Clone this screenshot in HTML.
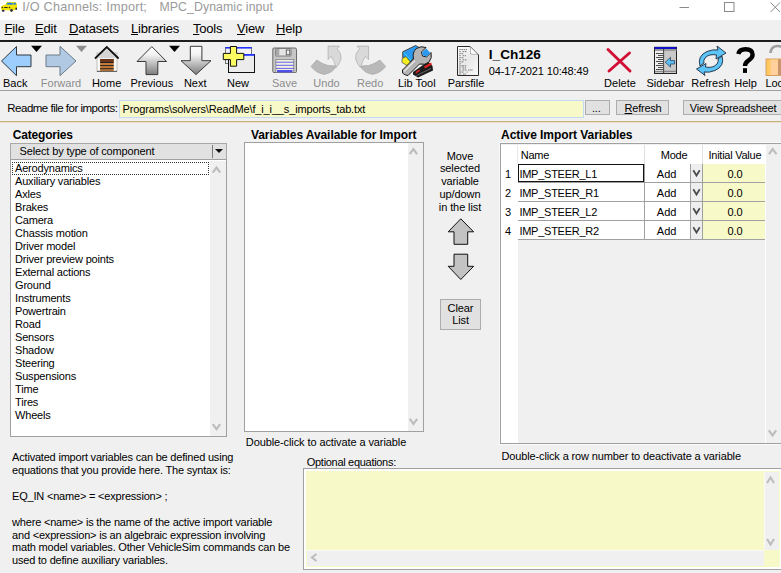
<!DOCTYPE html>
<html><head><meta charset="utf-8">
<style>
*{box-sizing:border-box;margin:0;padding:0}
html,body{width:781px;height:573px;overflow:hidden;background:#f0f0f0;font-family:"Liberation Sans",sans-serif;font-size:11px;color:#000}
.a{position:absolute;white-space:nowrap}
.t{position:absolute;white-space:nowrap;font-size:11px;line-height:13px;letter-spacing:-0.2px}
.mi{position:absolute;white-space:nowrap;top:20.5px;font-size:13px;line-height:15px;letter-spacing:-0.2px}
.mi u{text-decoration:underline;text-underline-offset:1px}
.tl{position:absolute;white-space:nowrap;top:76.8px;font-size:11px;line-height:13px;width:80px;text-align:center;letter-spacing:0px}
.g{color:#8c8c8c}
.b{position:absolute;white-space:nowrap;font-weight:bold;font-size:12px;line-height:14px;letter-spacing:-0.2px}
.btn{position:absolute;background:#e1e1e1;border:1px solid #adadad}
svg{position:absolute;overflow:visible}
</style></head><body>
<!-- title bar -->
<div class="a" style="left:0;top:0;width:781px;height:20px;background:#fff"></div>
<svg style="left:0;top:0" width="20" height="16" viewBox="0 0 20 16">
  <path d="M1 7 Q1.2 5.8 3 5.5 L5.5 4.5 L7 2 L15.5 2 L17 4 L17 9 L13 10.5 L2 10 L1 9 Z" fill="#f0e400"/>
  <path d="M6.3 4.6 L7.5 2.8 L12.8 2.8 L12.5 4.8 Z" fill="#1a7ef0"/>
  <path d="M13.5 2.8 L15.8 2.8 L16.3 4.6 L13.3 4.8 Z" fill="#2a80e0"/>
  <circle cx="2.4" cy="7.5" r="0.8" fill="#333"/><circle cx="9.5" cy="7.5" r="0.8" fill="#333"/>
  <rect x="4.2" y="7" width="3.4" height="1" fill="#222"/>
  <ellipse cx="3.2" cy="10.8" rx="1.4" ry="1" fill="#223"/>
  <ellipse cx="11.5" cy="10.3" rx="1.3" ry="1.6" fill="#334"/>
  <ellipse cx="16.2" cy="8.7" rx="0.8" ry="1.3" fill="#223"/>
</svg>
<div class="a" style="left:22.3px;top:0px;font-size:12.7px;line-height:15px;letter-spacing:0.2px;color:#9a9a9a">I/O Channels: Import;</div>
<div class="a" style="left:159.5px;top:0px;font-size:12.3px;line-height:15px;letter-spacing:0.08px;color:#9a9a9a">MPC_Dynamic input</div>
<svg style="left:679px;top:0" width="102" height="14" viewBox="0 0 102 14">
  <line x1="0.5" y1="7.5" x2="10" y2="7.5" stroke="#8a8a8a" stroke-width="1"/>
  <rect x="45.5" y="2.5" width="9.5" height="9" fill="none" stroke="#8a8a8a" stroke-width="1"/>
  <path d="M91.5 2.5 L101 12 M101 2.5 L91.5 12" stroke="#8a8a8a" stroke-width="1"/>
</svg>
<!-- menu -->
<div class="mi" style="left:4.5px"><u>F</u>ile</div>
<div class="mi" style="left:35px"><u>E</u>dit</div>
<div class="mi" style="left:69px"><u>D</u>atasets</div>
<div class="mi" style="left:131px"><u>L</u>ibraries</div>
<div class="mi" style="left:193px"><u>T</u>ools</div>
<div class="mi" style="left:237px"><u>V</u>iew</div>
<div class="mi" style="left:276px"><u>H</u>elp</div>
<div class="a" style="left:0;top:40px;width:781px;height:2px;background:#1e1e1e"></div>

<!-- toolbar icons -->
<svg style="left:0;top:0" width="781" height="92" viewBox="0 0 781 92">
  <defs>
    <linearGradient id="gup" x1="0" y1="0" x2="0" y2="1"><stop offset="0" stop-color="#ffffff"/><stop offset="0.3" stop-color="#f2f2f2"/><stop offset="1" stop-color="#7c7c7c"/></linearGradient>
    <linearGradient id="gpage" x1="0" y1="0" x2="1" y2="1"><stop offset="0" stop-color="#ffffff"/><stop offset="0.5" stop-color="#e8e8e8"/><stop offset="1" stop-color="#fafafa"/></linearGradient>
    <linearGradient id="gundo" x1="0" y1="0" x2="0" y2="1"><stop offset="0" stop-color="#e6e6e6"/><stop offset="1" stop-color="#b4b4b4"/></linearGradient>
  </defs>
  <!-- back -->
  <path d="M1.5 61 L16.5 46.5 L16.5 55 L31 55 L31 66.7 L16.5 66.7 L16.5 75.7 Z" fill="#9dcdfc" stroke="#303840" stroke-width="1"/>
  <path d="M31 45.8 L42 45.8 L36.5 52 Z" fill="#000"/>
  <!-- forward -->
  <path d="M46 55 L60 55 L60 46.3 L76 61 L60 75.7 L60 66.7 L46 66.7 Z" fill="#b1c9e2" stroke="#6e7b88" stroke-width="1"/>
  <path d="M76 45.8 L87 45.8 L81.5 52 Z" fill="#8c8c8c"/>
  <!-- home -->
  <rect x="97" y="53" width="20" height="18.5" fill="#f8f8f8" stroke="#b0a8a0" stroke-width="0.7"/>
  <path d="M97.5 58.3 L106.8 49 L116.5 58.3 Z" fill="#d4d4d4"/>
  <path d="M95 58.5 L106.8 47 L118.6 58.5" fill="none" stroke="#111" stroke-width="1.8"/>
  <rect x="100.1" y="59" width="13.6" height="12" fill="#c47a36"/>
  <rect x="100.1" y="59" width="13.6" height="3" fill="#6a3418"/>
  <path d="M100.1 62.5 H113.7 M100.1 65.6 H113.7 M100.1 68.7 H113.7" stroke="#222" stroke-width="1"/>
  <path d="M97 71.3 H117" stroke="#333" stroke-width="0.8"/>
  <!-- previous -->
  <path d="M137 61.5 L151.8 46.6 L166.6 61.5 L157.8 61.5 L157.8 74.6 L146 74.6 L146 61.5 Z" fill="url(#gup)" stroke="#3a3a3a" stroke-width="1"/>
  <path d="M169 45.8 L180 45.8 L174.5 52 Z" fill="#000"/>
  <!-- next -->
  <path d="M190.3 46.3 L201.9 46.3 L201.9 60.7 L211 60.7 L196 74.6 L181 60.7 L190.3 60.7 Z" fill="url(#gup)" stroke="#3a3a3a" stroke-width="1"/>
  <!-- new -->
  <rect x="225.5" y="47.5" width="26" height="16" fill="#f2f2f2" stroke="#555" stroke-width="0.8"/>
  <rect x="225.5" y="47" width="26" height="1.6" fill="#2030ff"/>
  <rect x="228.5" y="54.5" width="26" height="18" fill="#ececec" stroke="#111" stroke-width="1"/>
  <rect x="228.5" y="54" width="26" height="1.8" fill="#2030ff"/>
  <path d="M230.4 46.5 H236.6 V53.4 H243.8 V59.6 H236.6 V66.2 H230.4 V59.6 H223.3 V53.4 H230.4 Z" fill="#fcfc62" stroke="#111" stroke-width="1"/>
  <!-- save -->
  <path d="M272.8 49 Q272.8 48 274 48 L295 48 Q296.5 48 296.5 49.5 L296.5 71.5 Q296.5 72.5 295.5 72.5 L274 72.5 Q272.8 72.5 272.8 71.5 Z" fill="#c6c6c6" stroke="#6a6a6a" stroke-width="1"/>
  <rect x="275.5" y="48.5" width="15.5" height="7.5" rx="0.8" fill="#e4e4e4" stroke="#6a6a6a" stroke-width="0.8"/>
  <rect x="275.8" y="49" width="3.5" height="6.8" fill="#a8a8a8"/>
  <rect x="286.3" y="50" width="3.5" height="4.8" fill="#f0f0f0" stroke="#555" stroke-width="0.9"/>
  <rect x="275.9" y="59.4" width="17.9" height="13" fill="#f2f0e2" stroke="#666" stroke-width="0.6"/>
  <path d="M276 62.2 H293.8 M276 65.3 H293.8 M276 68.4 H293.8" stroke="#5050e6" stroke-width="0.9"/>
  <rect x="277" y="70" width="15.5" height="2.4" fill="#5050e6"/>
  <!-- undo -->
  <g id="undoi">
  <path d="M311 66.5 L316.8 60 Q322 64 328 65.5 L336.3 66 Q333 73 324 74.4 Q316 73 311 66.5 Z" fill="#b9b9b9" stroke="#a8a8a8" stroke-width="0.7"/>
  <path d="M328.1 46.1 L339.5 46.1 L337.2 48.7 Q342 54 341 59 Q339.5 64 336.3 67.5 L335.6 65.8 Q334 60 331 56.2 L328.1 59.6 Z" fill="#d9d9d9" stroke="#ababab" stroke-width="0.7"/>
  </g>
  <!-- redo -->
  <g transform="translate(696.65,0) scale(-1,1)">
  <path d="M311 66.5 L316.8 60 Q322 64 328 65.5 L336.3 66 Q333 73 324 74.4 Q316 73 311 66.5 Z" fill="#b9b9b9" stroke="#a8a8a8" stroke-width="0.7"/>
  <path d="M328.1 46.1 L339.5 46.1 L337.2 48.7 Q342 54 341 59 Q339.5 64 336.3 67.5 L335.6 65.8 Q334 60 331 56.2 L328.1 59.6 Z" fill="#d9d9d9" stroke="#ababab" stroke-width="0.7"/>
  </g>
  <!-- lib tool -->
  <path d="M402.7 51.8 L415.6 45.5 L419 47.5 L416 55 L410 62.5 L402.7 57.5 Z" fill="#2c98ee" stroke="#3a2a20" stroke-width="0.8"/>
  <path d="M403.5 52.5 L411 60" stroke="#30e0ff" stroke-width="0.9"/>
  <path d="M402 58.5 L406 56.5 L410.5 62 L408 66 L402 62.5 Z" fill="#f4ee20" stroke="#333" stroke-width="0.6"/>
  <path d="M413 72 L428 61.5 L432.5 66 L433 70.5 L418 77.5 L413 74.5 Z" fill="#1c1c1c"/>
  <path d="M424 66.5 L431 62.5 L432 64.5 L425 68.5 Z M415.5 72 L419.5 69.5 L420 71 L416 73.5 Z" fill="#e02020"/>
  <path d="M416.5 75.5 L431 68.5" stroke="#888" stroke-width="0.7"/>
  <path d="M402.5 70 L413.5 59 Q412 52 416.5 48.5 Q421 45.5 426 47.5 L421.5 52 L422.5 56 L426.5 57 L431 52.5 Q432.5 58 429 62 Q425 65.5 419.5 64 L408 75.5 Q405 75.5 402.5 73 Z" fill="#b4b4b4" stroke="#1a1a1a" stroke-width="1"/>
  <path d="M404 71.5 L415 60.5" stroke="#e8e8e8" stroke-width="1.2"/>
  <path d="M422 52.5 L426.3 48.5 L430.3 53 L426.5 56.5 L423 55.5 Z" fill="#2c98ee"/>
  <!-- parsfile -->
  <path d="M457.5 46.5 L470 46.5 L478.5 55 L478.5 75.5 L457.5 75.5 Z" fill="url(#gpage)" stroke="#2a2a2a" stroke-width="1"/>
  <path d="M470.5 47 L470.5 54 L478 54.5 Z" fill="#fdfdfd" stroke="#777" stroke-width="0.5"/>
  <path d="M459.2 49.60 H467 M459.2 51.64 H460.8 M462.5 51.64 H467 M459.2 53.68 H463.8 M459.2 55.72 H460.8 M462.5 55.72 H466 M459.2 57.76 H464 M459.2 59.80 H460.8 M462.5 59.80 H467 M459.2 61.84 H464 M459.2 63.88 H461.5 M459.2 65.92 H463.5 M462.5 65.92 H466.5 M459.2 67.96 H460.8 M462.5 67.96 H466 M459.2 70.00 H460.8 M462.5 70.00 H467 M468 70.00 H473 M459.2 72.04 H464 M466.5 72.04 H467.5 M459.2 74.08 H460.8 M463 74.08 H466 " stroke="#6a6a6a" stroke-width="0.9" stroke-dasharray="1.6 0.6"/>
  <!-- delete -->
  <path d="M608 49.5 L630 71 M629.5 53 L609 71" stroke="#d10f35" stroke-width="2.9" stroke-linecap="round"/>
  <!-- sidebar -->
  <rect x="654.5" y="47.3" width="22" height="26.2" fill="#c9c9c9" stroke="#222" stroke-width="1"/>
  <rect x="654.5" y="47" width="22" height="2" fill="#1010c8"/>
  <rect x="655" y="49" width="21.5" height="2" fill="#9a9a9a"/>
  <rect x="655" y="51" width="8.3" height="20" fill="#efefef"/>
  <path d="M656 53.5 H663 M658 55.5 H663 M656 57.5 H663 M658 59.5 H663 M656 61.5 H663 M658 63.5 H663 M656 65.5 H663 M658 67.5 H663 M656 69.5 H663" stroke="#3a3a3a" stroke-width="0.9"/>
  <line x1="663.6" y1="49" x2="663.6" y2="73.5" stroke="#333" stroke-width="0.9"/>
  <line x1="655" y1="71.3" x2="676.5" y2="71.3" stroke="#555" stroke-width="0.7"/>
  <path d="M665.3 62.2 L670.5 57.3 L670.5 60.6 L674.6 60.6 L674.6 64 L670.5 64 L670.5 67.1 Z" fill="#5cc0f4" stroke="#1d3050" stroke-width="0.7"/>
  <!-- refresh -->
  <path d="M700 66 Q697 56 707 51.5 Q713 49 718 50 L717 46 L726 53 L716 59 L716.5 55 Q709 53.5 705 58 Q703 61 704 63 Z" fill="#5cc4f6" stroke="#1a2a40" stroke-width="0.9"/>
  <path d="M722 56 Q725 66 715 70.5 Q709 73 704 72 L705 75.5 L696.5 69 L706 63.5 L705.5 67 Q713 68.5 717 64 Q719 61 718 59 Z" fill="#5cc4f6" stroke="#1a2a40" stroke-width="0.9"/>
  <!-- help -->
  <path d="M738.3 54 Q739.5 49.3 745.5 49.3 Q752.6 49.3 752.6 54.8 Q752.6 57.8 748.3 60.6 Q745 62.8 745 66" fill="none" stroke="#000" stroke-width="4.4"/>
  <rect x="743" y="68.2" width="4" height="4.7" fill="#000"/>
  <!-- lock -->
  <path d="M770.5 53 Q771 46.5 777 46 Q782 45.8 784 49" fill="none" stroke="#a0a0a0" stroke-width="2.6"/>
  <rect x="766" y="59" width="16" height="16.5" fill="#ffc860" stroke="#d09050" stroke-width="0.8"/>
  <rect x="770.5" y="59.5" width="7.5" height="15.5" fill="#ffd09a"/>
  <rect x="778" y="59.5" width="4" height="15.5" fill="#c8966a"/>
</svg>
<div class="tl" style="left:-24.8px">Back</div>
<div class="tl g" style="left:21px">Forward</div>
<div class="tl" style="left:66.6px">Home</div>
<div class="tl" style="left:111.8px">Previous</div>
<div class="tl" style="left:155.2px">Next</div>
<div class="tl" style="left:198px">New</div>
<div class="tl g" style="left:244.5px">Save</div>
<div class="tl g" style="left:286.5px">Undo</div>
<div class="tl g" style="left:330.2px">Redo</div>
<div class="tl" style="left:376.8px">Lib Tool</div>
<div class="tl" style="left:426px">Parsfile</div>
<div class="tl" style="left:580px">Delete</div>
<div class="tl" style="left:625.5px">Sidebar</div>
<div class="tl" style="left:670.5px">Refresh</div>
<div class="tl" style="left:705.5px">Help</div>
<div class="t" style="left:765.5px;top:76.8px;letter-spacing:-0.1px">Lock</div>
<div class="a" style="left:488.8px;top:47.1px;font-weight:bold;font-size:13.6px;line-height:16px">I_Ch126</div>
<div class="t" style="left:488.8px;top:64.9px;letter-spacing:-0.13px">04-17-2021 10:48:49</div>
<div class="a" style="left:0;top:90px;width:781px;height:1px;background:#a0a0a0"></div>

<!-- readme row -->
<div class="t" style="left:7.3px;top:102px;font-size:11.5px;letter-spacing:-0.5px">Readme file for imports:</div>
<div class="a" style="left:119px;top:100px;width:465px;height:18px;background:#f8f9c8;border:1px solid #c4daf0"></div>
<div class="t" style="left:122.5px;top:102.5px;letter-spacing:-0.14px">Programs\solvers\ReadMe\f_i_i__s_imports_tab.txt</div>
<div class="btn" style="left:585px;top:100px;width:25px;height:15px"></div>
<div class="t" style="left:592px;top:102px">...</div>
<div class="btn" style="left:616px;top:100px;width:53px;height:15px"></div>
<div class="t" style="left:624.6px;top:102px;letter-spacing:-0.25px"><u>R</u>efresh</div>
<div class="btn" style="left:683px;top:100px;width:100px;height:15px"></div>
<div class="t" style="left:689.8px;top:102px;letter-spacing:-0.15px">View Spreadsheet</div>
<div class="a" style="left:0;top:121px;width:781px;height:1px;background:#c4b27a"></div><div class="a" style="left:0;top:122px;width:781px;height:1px;background:#e6e0cc"></div>

<!-- section labels -->
<div class="b" style="left:12.8px;top:127.7px">Categories</div>
<div class="b" style="left:251px;top:127.6px;letter-spacing:-0.08px">Variables Available for Import</div>
<div class="b" style="left:501.1px;top:128.3px;letter-spacing:-0.06px">Active Import Variables</div>

<!-- categories -->
<div class="a" style="left:10px;top:143px;width:217px;height:17.5px;background:#e1e1e1;border:1px solid #a8a8a8;border-bottom:2px solid #a0a0a0"></div>
<div class="a" style="left:211.5px;top:145px;width:1px;height:13px;background:#7a7a7a"></div>
<svg style="left:214px;top:148px" width="10" height="6"><path d="M1 1 L9 1 L5 5 Z" fill="#111"/></svg>
<div class="t" style="left:19.6px;top:145.2px;letter-spacing:-0.15px">Select by type of component</div>
<div class="a" style="left:10px;top:160px;width:217px;height:277px;background:#fff;border:1px solid #a0a0a0;border-top:none"></div>
<div class="a" style="left:210px;top:161px;width:16px;height:275px;background:#f0f0f0"></div>
<div class="a" style="left:12px;top:162px;width:197px;height:13px;border:1px dotted #333"></div>
<div class="t" style="left:15px;top:162.2px;line-height:13px;letter-spacing:-0.18px">Aerodynamics<br>Auxiliary variables<br>Axles<br>Brakes<br>Camera<br>Chassis motion<br>Driver model<br>Driver preview points<br>External actions<br>Ground<br>Instruments<br>Powertrain<br>Road<br>Sensors<br>Shadow<br>Steering<br>Suspensions<br>Time<br>Tires<br>Wheels</div>

<!-- variables available -->
<div class="a" style="left:244px;top:142px;width:180px;height:289.5px;background:#fff;border:1px solid #a0a0a0"></div>
<div class="a" style="left:407.5px;top:143px;width:15.5px;height:287.5px;background:#f0f0f0"></div>
<div class="t" style="left:245.8px;top:435.6px;letter-spacing:-0.1px">Double-click to activate a variable</div>

<!-- move controls -->
<div class="t" style="left:420px;top:149.5px;width:80px;text-align:center;line-height:12.9px;letter-spacing:-0.1px">Move<br>selected<br>variable<br>up/down<br>in the list</div>
<svg style="left:440px;top:210px" width="40" height="80" viewBox="0 0 40 80">
  <path d="M20.8 8.8 L33.6 21.8 L27.7 21.8 L27.7 34.3 L14 34.3 L14 21.8 L8.2 21.8 Z" fill="#c3c3c3" stroke="#111" stroke-width="1"/>
  <path d="M14 44.2 L27.7 44.2 L27.7 56.3 L33.6 56.3 L20.8 69.5 L8.2 56.3 L14 56.3 Z" fill="#c3c3c3" stroke="#111" stroke-width="1"/>
</svg>
<div class="btn" style="left:440px;top:299px;width:41px;height:31px"></div>
<div class="t" style="left:440px;top:301.5px;width:41px;text-align:center;line-height:12.5px;letter-spacing:-0.1px">Clear<br>List</div>

<!-- active grid -->
<div class="a" style="left:499px;top:142px;width:282px;height:303px;background:#fafafa"></div>
<div class="a" style="left:500px;top:143px;width:281px;height:301px;background:#f0f0f0;border:1px solid #a0a0a0;border-right:none"></div>
<div class="a" style="left:501px;top:144.5px;width:16.5px;height:298px;background:#fff"></div>
<div class="a" style="left:517px;top:144.5px;width:1px;height:19px;background:#e8e8e8"></div>
<div class="a" style="left:517.5px;top:144.5px;width:247.5px;height:19px;background:#fff"></div>
<div class="a" style="left:765px;top:144.5px;width:16px;height:298px;background:#f0f0f0;border-left:1px solid #fff"></div>
<div class="a" style="left:644px;top:144.5px;width:1px;height:19px;background:#e0e0e0"></div>
<div class="a" style="left:702px;top:144.5px;width:1px;height:19px;background:#e0e0e0"></div>
<div class="t" style="left:520.7px;top:148.5px">Name</div>
<div class="t" style="left:660.7px;top:148.7px">Mode</div>
<div class="t" style="left:708.5px;top:148.7px;letter-spacing:-0.25px">Initial Value</div>
<!-- rows -->
<div class="a" style="left:517.5px;top:163.5px;width:127px;height:76px;background:#fff"></div>
<div class="a" style="left:645px;top:163.5px;width:45.5px;height:76px;background:#fff"></div>
<div class="a" style="left:690.5px;top:163.5px;width:11.5px;height:76px;background:#eeeeee"></div>
<div class="a" style="left:702px;top:163.5px;width:63px;height:76px;background:#f8f9c8"></div>
<div class="a" style="left:517.5px;top:181.7px;width:247.5px;height:1.3px;background:#a0a0a0"></div>
<div class="a" style="left:517.5px;top:200.9px;width:247.5px;height:1.3px;background:#a0a0a0"></div>
<div class="a" style="left:517.5px;top:220px;width:247.5px;height:1.3px;background:#a0a0a0"></div>
<div class="a" style="left:517.5px;top:239px;width:247.5px;height:1.3px;background:#a0a0a0"></div>
<div class="a" style="left:644px;top:163.5px;width:1.2px;height:76px;background:#a0a0a0"></div>
<div class="a" style="left:690px;top:163.5px;width:1px;height:76px;background:#a0a0a0"></div>
<div class="a" style="left:701.5px;top:163.5px;width:1px;height:76px;background:#a0a0a0"></div>
<div class="a" style="left:517.8px;top:164px;width:126.7px;height:18.2px;border:1.6px solid #111"></div>
<svg style="left:691px;top:163px" width="11" height="80" viewBox="0 0 11 80">
  <path d="M2.3 7.2 L5.5 12.5 L8.7 7.2 M2.3 26.2 L5.5 31.5 L8.7 26.2 M2.3 45.2 L5.5 50.5 L8.7 45.2 M2.3 64.2 L5.5 69.5 L8.7 64.2" fill="none" stroke="#4a4a4a" stroke-width="1.7"/>
</svg>
<div class="t" style="left:504px;top:164.5px;width:8px;text-align:center;line-height:19px;letter-spacing:0">1<br>2<br>3<br>4</div>
<div class="t" style="left:519.4px;top:164.5px;line-height:19px;letter-spacing:-0.25px">IMP_STEER_L1<br>IMP_STEER_R1<br>IMP_STEER_L2<br>IMP_STEER_R2</div>
<div class="t" style="left:656.8px;top:164.5px;line-height:19px;letter-spacing:0">Add<br>Add<br>Add<br>Add</div>
<div class="t" style="left:727.5px;top:164.5px;line-height:19px;letter-spacing:-0.1px">0.0<br>0.0<br>0.0<br>0.0</div>
<div class="t" style="left:501.5px;top:450.4px;letter-spacing:-0.14px">Double-click a row number to deactivate a variable</div>

<!-- left explanatory text -->
<div class="t" style="left:12.1px;top:451.1px;line-height:12.9px;letter-spacing:-0.2px">Activated import variables can be defined using<br>equations that you provide here. The syntax is:<br><br>EQ_IN &lt;name&gt; = &lt;expression&gt; ;<br><br>where &lt;name&gt; is the name of the active import variable<br>and &lt;expression&gt; is an algebraic expression involving<br>math model variables. Other VehicleSim commands can be<br>used to define auxiliary variables.</div>

<!-- equations -->
<div class="t" style="left:306.8px;top:455.5px;letter-spacing:-0.3px">Optional equations:</div>
<div class="a" style="left:303px;top:468px;width:478px;height:102px;background:#fff;border:1px solid #a0a0a0;border-right:none"></div>
<div class="a" style="left:306px;top:471px;width:474px;height:96px;background:#f8f9c8"></div>
<div class="a" style="left:307px;top:550px;width:456.5px;height:16px;background:#f0f0f0;border-top:1px solid #fafafa"></div>
<div class="a" style="left:763.5px;top:472px;width:15.5px;height:78px;background:#f0f0f0;border-left:1px solid #fafafa"></div>
<svg style="left:0;top:0" width="781" height="573" viewBox="0 0 781 573"><path d="M212.8 172.6 L216.5 167.6 L220.2 172.6 M212.8 424.2 L216.5 429.2 L220.2 424.2 M409.7 154.2 L413.4 149.2 L417.09999999999997 154.2 M409.8 418.79999999999995 L413.5 423.79999999999995 L417.2 418.79999999999995 M769.0 154.2 L772.7 149.2 L776.4000000000001 154.2 M768.8 430.4 L772.5 435.4 L776.2 430.4 M767 483 L770.5 477.5 L774 483 M767 539 L770.5 544.5 L774 539 M316.5 554 L312 557.5 L316.5 561" fill="none" stroke="#bdbdbd" stroke-width="2.2"/></svg>
</body></html>
